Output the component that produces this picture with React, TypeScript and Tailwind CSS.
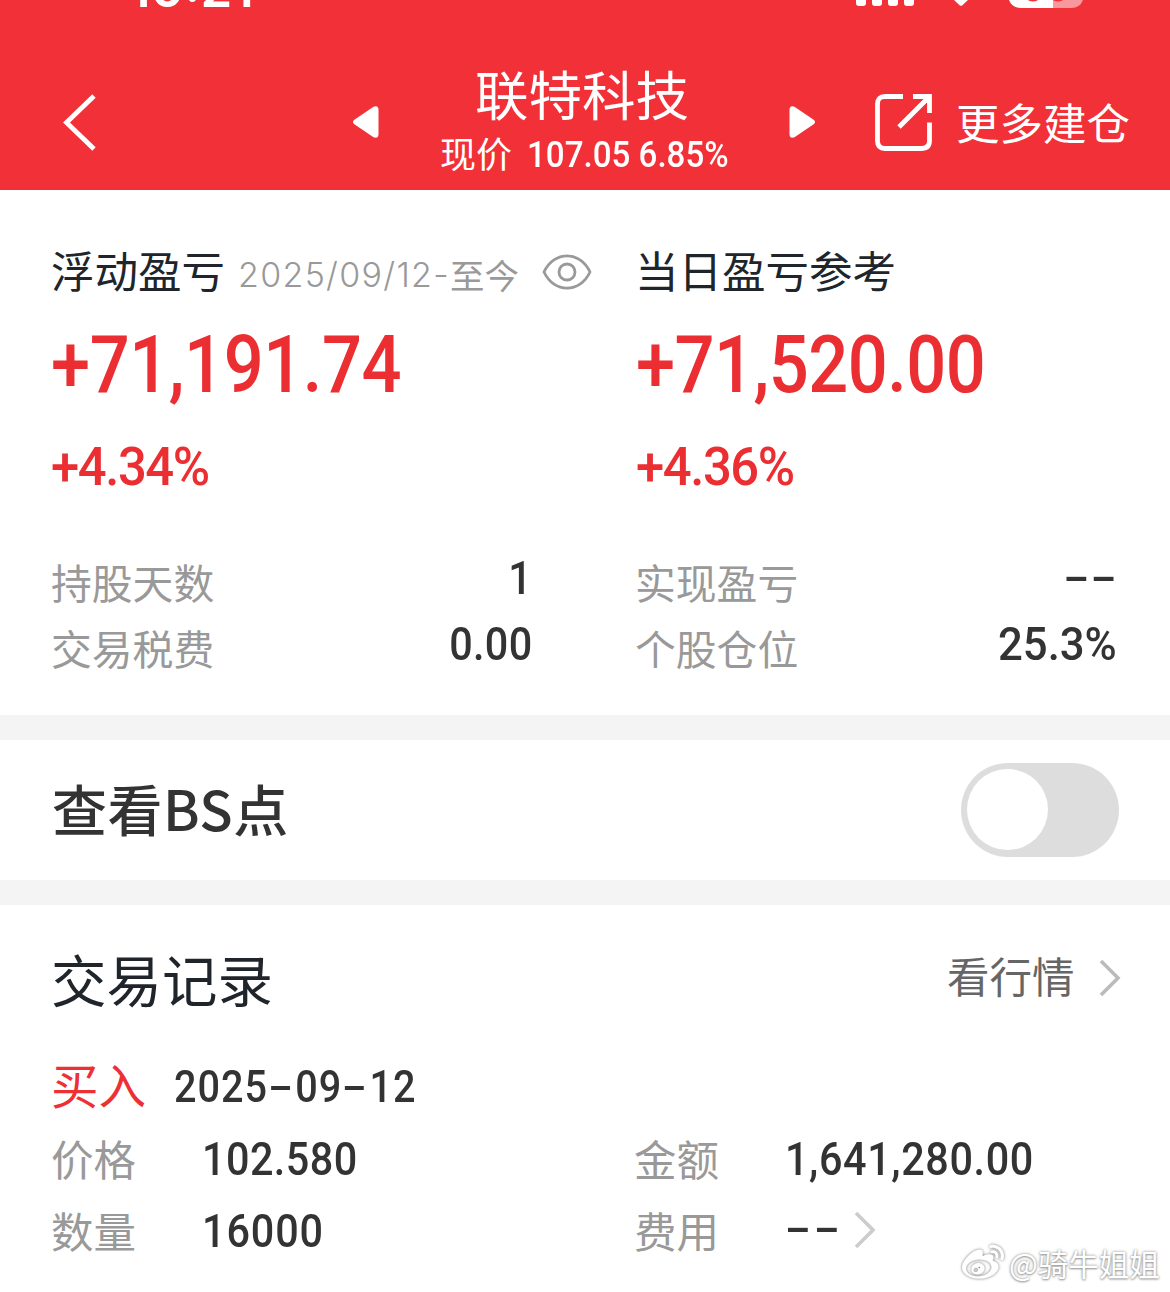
import { ReactNode } from "react";
import clsx from "clsx";
import { FaWeibo } from "react-icons/fa";

const numFont = "font-['Roboto','Noto_Sans_CJK_SC',sans-serif] font-medium";

function Num({ children, className }: { children: ReactNode; className?: string }) {
    return (
        <div className={clsx("w-fit whitespace-nowrap", numFont, className ?? "origin-left scale-x-[0.88]")}>
            {children}
        </div>
    );
}

function Dash({ className }: { className?: string }) {
    return (
        <span className={clsx("inline-block text-center", className)}>
            <span className="inline-block scale-x-[1.85] scale-y-[0.95]">-</span>
        </span>
    );
}

function Chevron({ className }: { className?: string }) {
    return (
        <svg viewBox="0 0 22 38" className={clsx("w-[22px] h-[38px] shrink-0", className)} fill="none" stroke="currentColor" strokeWidth="3.6">
            <path d="M2 2 L19 19 L2 36" />
        </svg>
    );
}

function StatusBar() {
    return (
        <div className="flex h-[12px] items-start overflow-hidden text-white">
            <div className="ml-[129px] -mt-[42px] w-[727px] font-['Inter',sans-serif] text-[51px] leading-[62px] font-semibold whitespace-nowrap">
                10:21
            </div>
            <div className="flex gap-[6px]">
                {[0, 1, 2, 3].map((i) => (
                    <div key={i} className="w-[10px] h-[6px] bg-white rounded-b-[3px]" />
                ))}
            </div>
            <svg viewBox="0 0 14 6" className="ml-[40px] w-[14px] h-[6px]" fill="currentColor">
                <path d="M0 0 H14 L8.4 5.3 Q7 6.4 5.6 5.3 Z" />
            </svg>
            <svg viewBox="0 0 74 8" className="ml-[41px] w-[74px] h-[8px]">
                <path d="M0 0 H44.5 V8 H12 Q3 8 0 0 Z" fill="#fff" />
                <path d="M44.5 0 H74 Q71 8 62 8 H44.5 Z" fill="#f9989c" />
                <ellipse cx="24" cy="-2" rx="6" ry="3.6" fill="#f23038" />
                <ellipse cx="49" cy="-2" rx="6" ry="3.6" fill="#f23038" />
            </svg>
        </div>
    );
}

function Header() {
    return (
        <header className="h-[190px] bg-[#f23038] text-white">
            <StatusBar />
            <div className="flex items-start">
                <svg viewBox="0 0 36 60" className="mt-[80px] ml-[62px] w-[36px] h-[60px]" fill="none" stroke="currentColor" strokeWidth="4.8">
                    <path d="M32 4 L4.5 30.5 L32 57" />
                </svg>
                <svg viewBox="0 0 28 34" className="mt-[93px] ml-[254px] w-[28px] h-[34px]" fill="currentColor">
                    <path d="M2 15 L21.5 1.8 Q26.5 0 26.5 5 V29 Q26.5 34 21.5 32.2 L2 19 Q0 17 2 15 Z" />
                </svg>
                <div className="ml-[60px] w-[290px] flex flex-col items-center">
                    <h1 className="mt-[51px] -ml-[6px] text-[53.5px] leading-[60px] font-normal whitespace-nowrap">联特科技</h1>
                    <div className="mt-[6px] flex self-start text-[36px] leading-[44px]">
                        <span className="mt-[1px] whitespace-nowrap">现价</span>
                        <Num className="mt-[4px] ml-[15px] origin-left scale-x-[0.92]">107.05 6.85%</Num>
                    </div>
                </div>
                <svg viewBox="0 0 28 34" className="mt-[93px] ml-[58px] w-[28px] h-[34px] -scale-x-100" fill="currentColor">
                    <path d="M2 15 L21.5 1.8 Q26.5 0 26.5 5 V29 Q26.5 34 21.5 32.2 L2 19 Q0 17 2 15 Z" />
                </svg>
                <svg viewBox="0 0 60 60" className="mt-[81px] ml-[58px] w-[60px] h-[60px]" fill="none" stroke="currentColor" strokeWidth="4.8">
                    <path d="M29 3.5 H11 Q3.5 3.5 3.5 11 V48 Q3.5 55.5 11 55.5 H47 Q55.5 55.5 55.5 48 V29.5" />
                    <path d="M39 3.5 H55.5 V20 M25 34 L55 4" />
                </svg>
                <div className="mt-[80px] ml-[22px] text-[43.5px] leading-[60px] whitespace-nowrap">更多建仓</div>
            </div>
        </header>
    );
}

function StatRow({ label, children, className }: { label: string; children: ReactNode; className?: string }) {
    return (
        <div className={clsx("flex h-[66px] justify-between", className)}>
            <span className="text-[40.8px] leading-[66px] text-[#999] whitespace-nowrap">{label}</span>
            <div className="-mt-[4px] text-[47px] leading-[66px] text-[#333]">{children}</div>
        </div>
    );
}

function Summary() {
    return (
        <section className="flex h-[525px]">
            <div className="ml-[51px] w-[585px]">
                <div className="mt-[50px] flex h-[60px]">
                    <span className="text-[43.5px] leading-[60px] text-[#20252b] whitespace-nowrap">浮动盈亏</span>
                    <span className="ml-[13px] mt-[4px] flex text-[34.5px] leading-[60px] text-[#999] whitespace-nowrap">
                        <span className="mt-[1px] font-['Inter',sans-serif] text-[34px] font-light tracking-[1.3px]">2025/09/12-</span>
                        <span>至今</span>
                    </span>
                    <svg viewBox="0 0 50 36" className="ml-[23px] mt-[14px] w-[50px] h-[36px] shrink-0" fill="none" stroke="#999" strokeWidth="2.8">
                        <path d="M2 18 C12 -3.5 38 -3.5 48 18 C38 39.5 12 39.5 2 18 Z" />
                        <circle cx="25" cy="18" r="8" />
                    </svg>
                </div>
                <div className="mt-[15px] text-[80px] leading-[100px] text-[#eb2e31]">
                    <Num className="origin-left scale-x-[0.88] tracking-[-0.5px]">+71,191.74</Num>
                </div>
                <div className="mt-[12px] text-[54px] leading-[80px] text-[#eb2e31]">
                    <Num className="origin-left scale-x-[0.94] tracking-[-1.5px]">+4.34%</Num>
                </div>
                <StatRow label="持股天数" className="mt-[42px] w-[481px]">
                    <Num className="origin-right scale-x-[0.88]">1</Num>
                </StatRow>
                <StatRow label="交易税费" className="w-[481px]">
                    <Num className="origin-right scale-x-[0.88] tracking-[0.3px]">0.00</Num>
                </StatRow>
            </div>
            <div className="-ml-[1px] w-[482px]">
                <div className="mt-[50px] h-[60px] text-[43.5px] leading-[60px] text-[#20252b]">当日盈亏参考</div>
                <div className="mt-[15px] ml-[1px] text-[80px] leading-[100px] text-[#eb2e31]">
                    <Num className="origin-left scale-x-[0.88] tracking-[-0.6px]">+71,520.00</Num>
                </div>
                <div className="mt-[12px] ml-[1px] text-[54px] leading-[80px] text-[#eb2e31]">
                    <Num className="origin-left scale-x-[0.94] tracking-[-1.5px]">+4.36%</Num>
                </div>
                <StatRow label="实现盈亏" className="mt-[42px]">
                    <Num className="-mt-[1px] origin-right scale-x-[0.88]">
                        <Dash className="w-[31px]" />
                        <Dash className="w-[31px]" />
                    </Num>
                </StatRow>
                <StatRow label="个股仓位">
                    <Num className="origin-right scale-x-[0.93]">25.3%</Num>
                </StatRow>
            </div>
        </section>
    );
}

function BsToggle() {
    return (
        <section className="flex h-[140px] items-center justify-between pl-[52px] pr-[51px]">
            <span className="-mt-[6px] text-[55px] leading-[80px] font-medium text-[#333] tracking-[0.5px]">查看BS点</span>
            <div className="w-[158px] h-[94px] rounded-full bg-[#ddd] p-[6px]">
                <div className="size-[81px] rounded-full bg-white" />
            </div>
        </section>
    );
}

function Field({ label, children, className }: { label: string; children: ReactNode; className?: string }) {
    return (
        <div className={clsx("flex h-[72px]", className)}>
            <span className="w-[151px] text-[42.5px] leading-[72px] text-[#999]">{label}</span>
            <div className="flex text-[47px] leading-[73px] text-[#333]">{children}</div>
        </div>
    );
}

function Records() {
    return (
        <section className="pl-[51px]">
            <div className="flex h-[145px] items-start">
                <h2 className="mt-[33px] w-[896px] text-[55.5px] leading-[80px] font-normal text-[#20252b]">交易记录</h2>
                <span className="mt-[30px] text-[42.5px] leading-[80px] text-[#666] whitespace-nowrap">看行情</span>
                <Chevron className="mt-[54px] ml-[24px] text-[#bbb]" />
            </div>
            <div className="flex h-[72px]">
                <span className="w-[123px] text-[47.5px] leading-[68px] text-[#ee2f33]">买入</span>
                <Num className="origin-left scale-x-[0.88] text-[45px] leading-[74px] text-[#333] tracking-[1.1px]">
                    2025<Dash className="w-[31px]" />09<Dash className="w-[31px]" />12
                </Num>
            </div>
            <div className="flex">
                <Field label="价格" className="w-[583px]">
                    <Num className="origin-left scale-x-[0.88] tracking-[0.5px]">102.580</Num>
                </Field>
                <Field label="金额">
                    <Num className="origin-left scale-x-[0.88] tracking-[0.7px]">1,641,280.00</Num>
                </Field>
            </div>
            <div className="flex">
                <Field label="数量" className="w-[583px]">
                    <Num className="origin-left scale-x-[0.88] tracking-[1px]">16000</Num>
                </Field>
                <Field label="费用">
                    <Num className="-mt-[3px] -ml-[2px] origin-left scale-x-[0.88]">
                        <Dash className="w-[33px]" />
                        <Dash className="w-[33px]" />
                    </Num>
                    <Chevron className="mt-[17px] ml-[5px] text-[#ccc]" />
                </Field>
            </div>
        </section>
    );
}

export default function App() {
    return (
        <div className="relative w-[1170px] h-[1292px] overflow-hidden bg-white font-['Noto_Sans_CJK_SC',sans-serif]">
            <Header />
            <Summary />
            <div className="h-[25px] bg-[#f4f4f4]" />
            <BsToggle />
            <div className="h-[25px] bg-[#f4f4f4]" />
            <Records />

            {/* Watermark */}
            <div className="absolute left-[962px] top-[1242px] flex items-center text-white">
                <FaWeibo className="size-[42px] drop-shadow-[0_0_1.5px_#777]" />
                <span className="ml-[5px] text-[30.5px] leading-[42px] whitespace-nowrap [text-shadow:0_0_3px_#888,0_1px_2px_#aaa]">@骑牛姐姐</span>
            </div>
        </div>
    );
}
